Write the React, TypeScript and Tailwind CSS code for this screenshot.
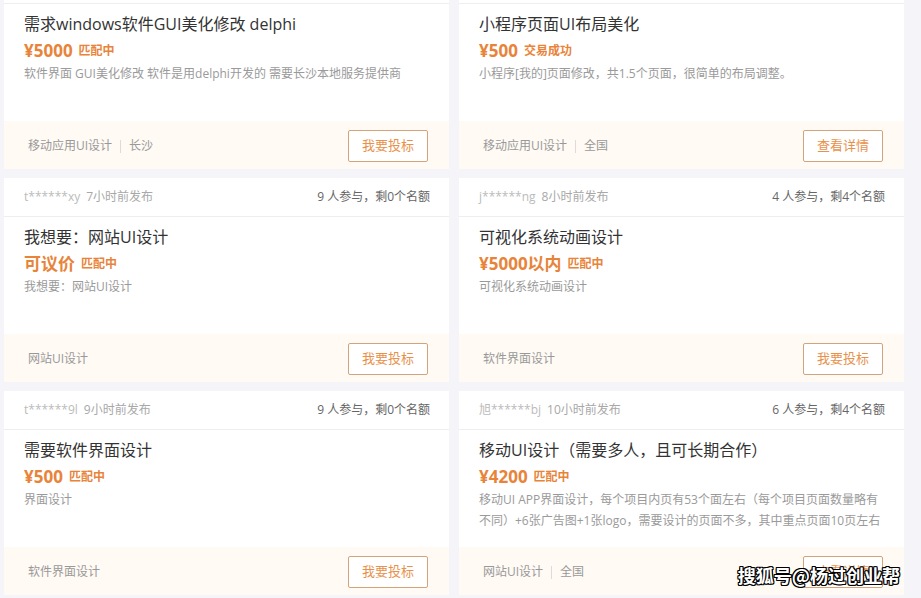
import React from "react";

type Task = {
  user?: string;
  time?: string;
  joined?: string;
  title: string;
  price: string;
  status: string;
  desc: string;
  tags: string[];
  action: string;
};

// first row is scrolled past its header, so no header text there
const tasks: Task[] = [
  {
    title: "需求windows软件GUI美化修改 delphi",
    price: "¥5000",
    status: "匹配中",
    desc: "软件界面 GUI美化修改 软件是用delphi开发的 需要长沙本地服务提供商",
    tags: ["移动应用UI设计", "长沙"],
    action: "我要投标",
  },
  {
    title: "小程序页面UI布局美化",
    price: "¥500",
    status: "交易成功",
    desc: "小程序[我的]页面修改，共1.5个页面，很简单的布局调整。",
    tags: ["移动应用UI设计", "全国"],
    action: "查看详情",
  },
  {
    user: "t******xy",
    time: "7小时前发布",
    joined: "9 人参与，剩0个名额",
    title: "我想要：网站UI设计",
    price: "可议价",
    status: "匹配中",
    desc: "我想要：网站UI设计",
    tags: ["网站UI设计"],
    action: "我要投标",
  },
  {
    user: "j******ng",
    time: "8小时前发布",
    joined: "4 人参与，剩4个名额",
    title: "可视化系统动画设计",
    price: "¥5000以内",
    status: "匹配中",
    desc: "可视化系统动画设计",
    tags: ["软件界面设计"],
    action: "我要投标",
  },
  {
    user: "t******9l",
    time: "9小时前发布",
    joined: "9 人参与，剩0个名额",
    title: "需要软件界面设计",
    price: "¥500",
    status: "匹配中",
    desc: "界面设计",
    tags: ["软件界面设计"],
    action: "我要投标",
  },
  {
    user: "旭******bj",
    time: "10小时前发布",
    joined: "6 人参与，剩4个名额",
    title: "移动UI设计（需要多人，且可长期合作）",
    price: "¥4200",
    status: "匹配中",
    desc: "移动UI APP界面设计，每个项目内页有53个面左右（每个项目页面数量略有不同）+6张广告图+1张logo，需要设计的页面不多，其中重点页面10页左右",
    tags: ["网站UI设计", "全国"],
    action: "查看详情",
  },
];

const TaskCard = ({ task }: { task: Task }) => (
  <div className="bg-white flex flex-col h-[204px]">
    {/* header */}
    <div className="h-[39px] shrink-0 flex items-center justify-between pl-[20px] pr-[19px] border-b border-[#eeeef2] text-[12px]">
      <div className="flex items-center gap-[6px]">
        <span className="text-[#bbbbbb]">{task.user}</span>
        <span className="text-[#a8a8a8]">{task.time}</span>
      </div>
      <span className="text-[#666]">{task.joined}</span>
    </div>

    {/* body */}
    <div className="h-[117px] shrink-0 pl-[20px] pr-[16px] pt-[8px] overflow-hidden">
      <div className="text-[16px] leading-[24px] text-[#333] whitespace-nowrap">{task.title}</div>
      <div className="mt-[3px] h-[24px] flex items-center gap-[6px] text-[#e8843a] font-bold">
        <span className="text-[17px]">{task.price}</span>
        <span className="text-[12px]">{task.status}</span>
      </div>
      <p className="text-[12px] leading-[21px] text-[#9a9a9a] max-h-[42px] overflow-hidden">{task.desc}</p>
    </div>

    {/* footer */}
    <div className="flex-1 bg-[#fffaf4] flex items-center justify-between pl-[24px] pr-[21px] pt-[2px]">
      <div className="flex items-center text-[12px] text-[#999]">
        {task.tags.map((t, i) => (
          <React.Fragment key={t}>
            {i > 0 && <span className="mx-[8px] w-px h-[13px] bg-[#dcdcdc]" />}
            <span>{t}</span>
          </React.Fragment>
        ))}
      </div>
      <button className="w-[80px] h-[32px] border border-[#d3a47c] rounded-[2px] bg-white text-[13px] text-[#e8914c]">
        {task.action}
      </button>
    </div>
  </div>
);

export default function App() {
  return (
    <div className="relative w-[921px] h-[598px] overflow-hidden bg-[#f4f4f9] font-['Open_Sans','Noto_Sans_CJK_SC',sans-serif]">
      <div className="grid grid-cols-[445px_445px] gap-x-[10px] gap-y-[9px] pl-[4px] -mt-[35px]">
        {tasks.map((task, i) => (
          <TaskCard key={i} task={task} />
        ))}
      </div>

      {/* watermark */}
      <div className="absolute right-[21px] bottom-[9px] text-[18px] font-bold text-white [text-shadow:1px_1px_0_#000,-1px_-1px_0_#000,1px_-1px_0_#000,-1px_1px_0_#000,0_1px_0_#000,1px_0_0_#000,0_-1px_0_#000,-1px_0_0_#000] font-['Noto_Sans_CJK_SC',sans-serif]">
        搜狐号@杨过创业帮
      </div>
    </div>
  );
}
